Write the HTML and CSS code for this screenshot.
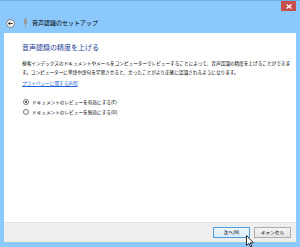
FILE: index.html
```html
<!DOCTYPE html>
<html lang="ja">
<head>
    <meta charset="UTF-8">
    <title>音声認識のセットアップ</title>
    <link rel="stylesheet" href="styles.css">
</head>
<body>
    <div class="window">
        <div class="titlebar">
            <svg class="back-btn" width="9" height="9" viewBox="0 0 9 9">
                <circle cx="4.5" cy="4.5" r="4" fill="#fff" stroke="#7a7a7a" stroke-width="1"/>
                <path d="M2.3 4.5h4.4M4.3 2.6L2.4 4.5l1.9 1.9" fill="none" stroke="#333" stroke-width="1"/>
            </svg>
            <svg class="mic" width="5" height="10" viewBox="0 0 5 10">
                <rect x="1" y="0.5" width="3" height="6" rx="1.5" fill="#9a9a9a"/>
                <path d="M2.5 6.5v3" stroke="#9a9a9a" stroke-width="1"/>
            </svg>
            <span class="title">音声認識のセットアップ</span>
            <span class="close-btn">
                <svg width="6" height="5" viewBox="0 0 6 5">
                    <path d="M0.5 0.5l5 4M5.5 0.5l-5 4" stroke="#fff" stroke-width="1.3"/>
                </svg>
            </span>
        </div>

        <div class="client">
            <div class="page">
                <h1 class="heading">音声認識の精度を上げる</h1>
                <p class="desc">検索インデックスのドキュメントやメールをコンピューターでレビューすることによって、音声認識の精度を上げることができます。コンピューターに単語や語句を学習させると、言ったことがより正確に認識されるようになります。</p>
                <a class="link" href="#">プライバシーに関する声明</a>

                <div class="options">
                    <label class="option"><span class="radio checked"></span>ドキュメントのレビューを有効にする(E)</label>
                    <label class="option"><span class="radio"></span>ドキュメントのレビューを無効にする(D)</label>
                </div>
            </div>
            <div class="footer">
                <button class="btn btn-default">次へ(N)</button>
                <button class="btn">キャンセル</button>
            </div>
        </div>

        <svg class="cursor" width="8" height="13" viewBox="0 0 8 13">
            <path d="M0.5 0.5v10l2.3-2.2 1.6 3.6 1.4-0.6-1.6-3.5h3.2z" fill="#fff" stroke="#000" stroke-width="0.8"/>
        </svg>
    </div>
</body>
</html>
```

FILE: styles.css
```css
body { margin: 0; font-family: "Noto Sans CJK JP", "Liberation Sans", sans-serif; }
.window { position: relative; width: 300px; height: 247px; box-sizing: border-box; background: #8bc8fb; border-top: 1px solid #6aaeea; display: flex; flex-direction: column; }
.titlebar { height: 32px; display: flex; align-items: center; padding: 12px 0 0 6px; box-sizing: border-box; }
.back-btn { flex-shrink: 0; }
.mic { flex-shrink: 0; margin-left: 8px; }
.title { flex-shrink: 0; margin-left: 4px; font-size: 6px; color: #000; line-height: 10px; }
.close-btn { position: absolute; top: 0; right: 4px; width: 15px; height: 10px; background: #c7504f; display: flex; align-items: center; justify-content: center; }
.client { flex: 1; margin: 0 4px 5px; display: flex; flex-direction: column; background: #fff; }
.page { flex: 1; padding: 9px 0 0 18px; }
.heading { margin: 0; font-size: 7px; line-height: 11px; font-weight: normal; color: #1e3c96; }
.desc { margin: 6px 0 0; width: 270px; font-size: 4.65px; line-height: 9px; color: #000; }
.link { display: block; margin-top: 2px; font-size: 4.65px; line-height: 9px; color: #1d5fd6; }
.options { margin-top: 9px; display: flex; flex-direction: column; }
.option { display: flex; align-items: center; height: 10px; font-size: 4.65px; color: #000; }
.radio { width: 4px; height: 4px; border: 1px solid #777; border-radius: 50%; margin: 0 3px 0 1px; display: flex; align-items: center; justify-content: center; background: #fff; }
.radio.checked::after { content: ""; width: 2px; height: 2px; border-radius: 50%; background: #333; }
.footer { height: 20px; background: #eeeeee; border-top: 1px solid #e3e3e3; border-bottom: 1px solid #f3ecd8; box-sizing: border-box; display: flex; align-items: center; justify-content: flex-end; padding-right: 5px; gap: 4px; }
.btn { height: 11px; padding: 0; font-family: inherit; font-size: 4.65px; color: #000; background: linear-gradient(#f4f4f4, #e4e4e4); border: 1px solid #adadad; border-radius: 0; }
.btn-default { width: 37px; border-color: #4f9be0; background: linear-gradient(#eef6fd, #dcecfc); }
.btn:last-child { width: 37px; }
.cursor { position: absolute; left: 246px; top: 234px; }
```
